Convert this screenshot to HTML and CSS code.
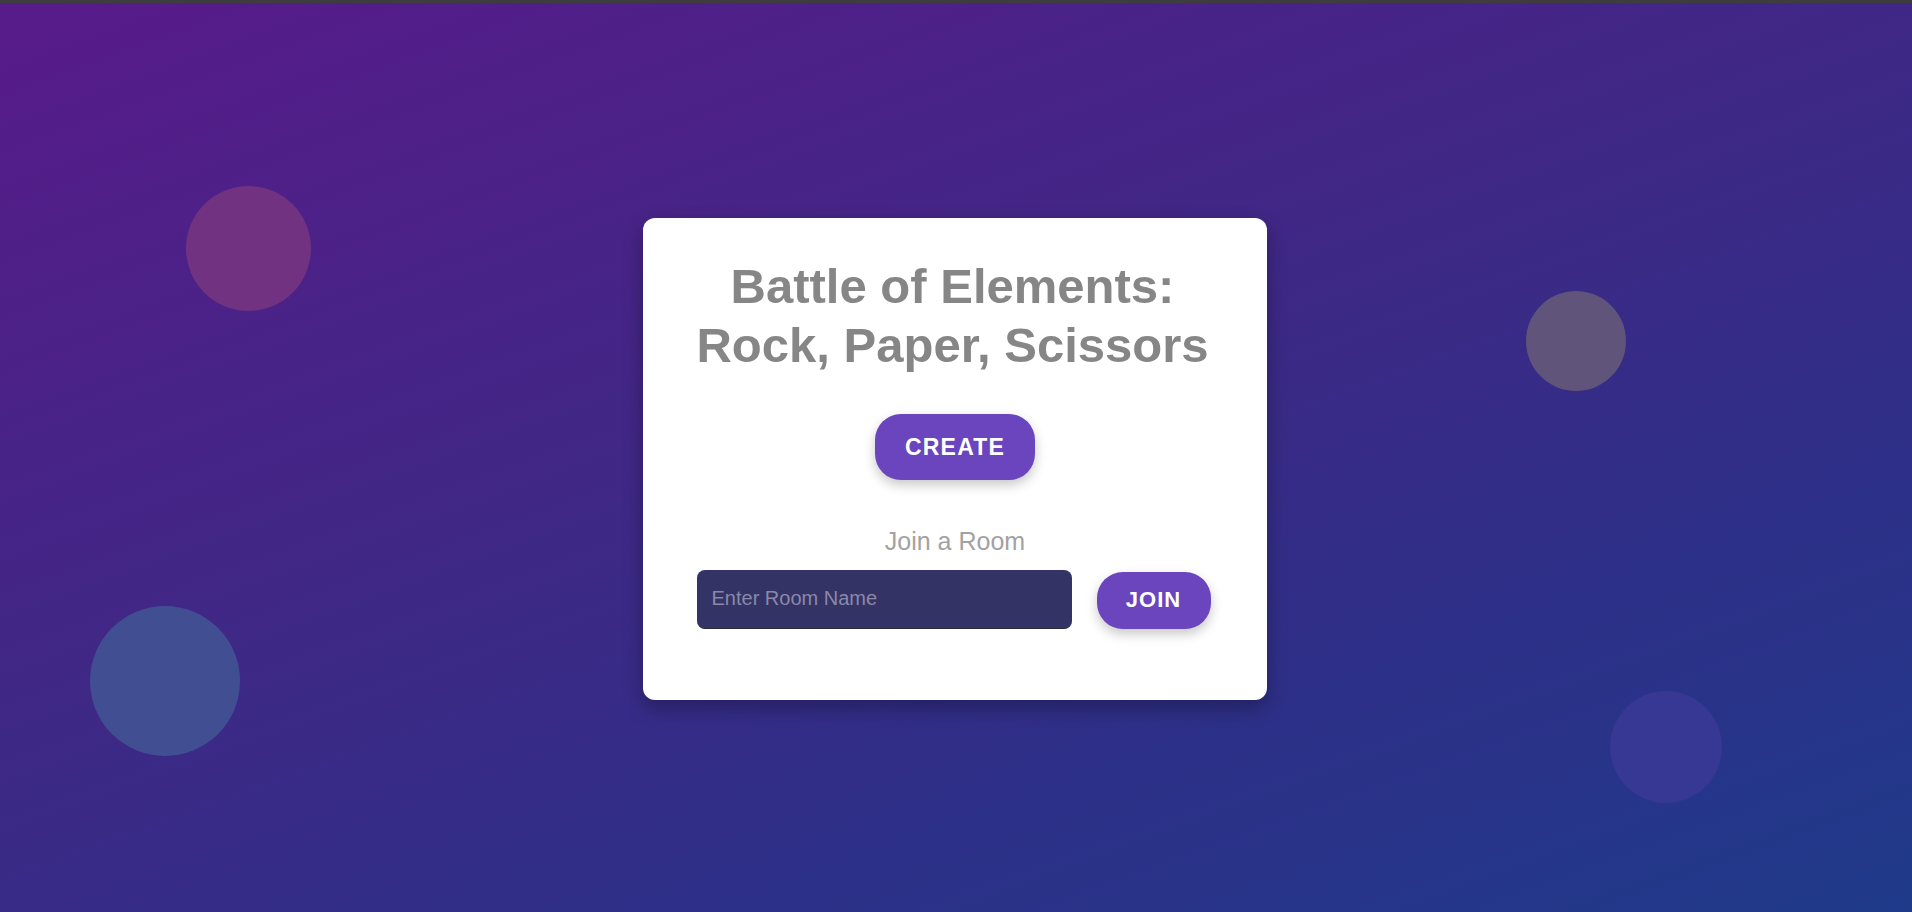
FILE: index.html
```html
<!DOCTYPE html>
<html lang="en">
<head>
<meta charset="utf-8">
<title>Battle of Elements</title>
<link rel="stylesheet" href="styles.css">
</head>
<body>
<div class="topbar"></div>
<main class="stage">
  <span class="bubble bubble-pink"></span>
  <span class="bubble bubble-blue"></span>
  <span class="bubble bubble-tan"></span>
  <span class="bubble bubble-violet"></span>
  <section class="card">
    <h1 class="title">Battle of Elements:<br>Rock, Paper, Scissors</h1>
    <button class="btn btn-create">CREATE</button>
    <p class="join-label">Join a Room</p>
    <div class="join-row">
      <input class="room-input" type="text" placeholder="Enter Room Name">
      <button class="btn btn-join">JOIN</button>
    </div>
  </section>
</main>
</body>
</html>
```

FILE: styles.css
```css
html, body {
  margin: 0;
  height: 100%;
}
body {
  display: flex;
  flex-direction: column;
  font-family: "Liberation Sans", Arial, sans-serif;
  overflow: hidden;
}
.topbar {
  height: 3px;
  background: #3d3d3f;
  flex: none;
}
.stage {
  flex: 1;
  position: relative;
  overflow: hidden;
  display: flex;
  align-items: center;
  justify-content: center;
  background: linear-gradient(160deg, #581b8a 0%, #3f2886 45%, #2f2f88 70%, #1f3a8a 100%);
}
.bubble {
  position: absolute;
  border-radius: 50%;
}
.bubble-pink {
  left: 186px;
  top: 183px;
  width: 125px;
  height: 125px;
  background: #703281;
}
.bubble-blue {
  left: 90px;
  top: 603px;
  width: 150px;
  height: 150px;
  background: #424e92;
}
.bubble-tan {
  left: 1526px;
  top: 288px;
  width: 100px;
  height: 100px;
  background: #60547b;
}
.bubble-violet {
  left: 1610px;
  top: 688px;
  width: 112px;
  height: 112px;
  background: #363893;
}
.card {
  position: relative;
  width: 624px;
  box-sizing: border-box;
  margin: 2px 2px 0 0;
  padding: 39px 0 71px;
  background: #ffffff;
  border-radius: 12px;
  box-shadow: 0 8px 20px rgba(0, 0, 0, 0.3);
  display: flex;
  flex-direction: column;
  align-items: center;
  text-align: center;
}
.title {
  margin: 0;
  padding-right: 5px;
  font-size: 49px;
  line-height: 59px;
  font-weight: 700;
  color: #868686;
}
.btn {
  border: none;
  font-family: "Liberation Sans", Arial, sans-serif;
  font-weight: 700;
  font-size: 22px;
  line-height: 26px;
  letter-spacing: 1px;
  color: #ffffff;
  background: #6a45be;
  box-shadow: 0 5px 12px rgba(0, 0, 0, 0.22);
  cursor: pointer;
}
.btn-create {
  margin-top: 39px;
  padding: 20px 30px;
  font-size: 23px;
  letter-spacing: 1.2px;
  border-radius: 26px;
}
.join-label {
  margin: 47px 0 0;
  font-size: 25px;
  line-height: 29px;
  color: #a2a2a2;
}
.join-row {
  margin: 14px 3px 0 0;
  display: flex;
  align-items: center;
  gap: 25px;
}
.room-input {
  width: 375px;
  height: 59px;
  box-sizing: border-box;
  padding: 0 15px;
  border: none;
  border-bottom: 1px solid #2a2a3c;
  border-radius: 8px;
  background: #343366;
  color: #ffffff;
  font-family: "Liberation Sans", Arial, sans-serif;
  font-size: 20px;
  outline: none;
}
.room-input::placeholder {
  color: #8a88a8;
}
.btn-join {
  margin-top: 2px;
  width: 114px;
  height: 57px;
  padding: 0;
  border-radius: 26px;
}
```
